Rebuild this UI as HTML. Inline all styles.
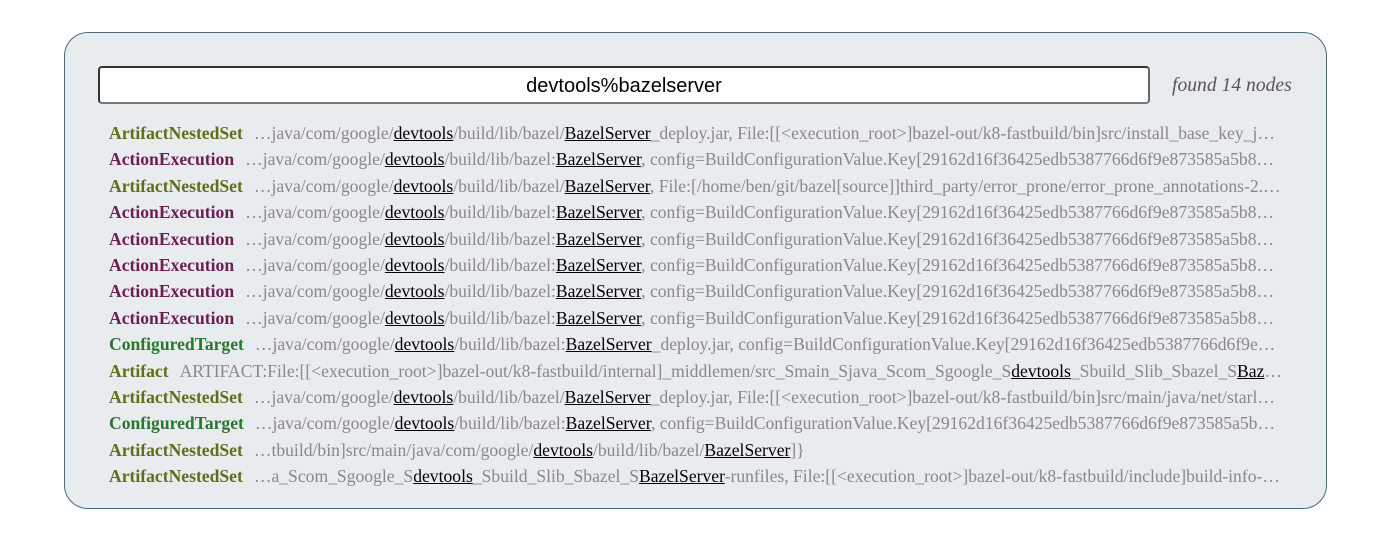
<!DOCTYPE html>
<html><head><meta charset="utf-8"><style>
body{margin:0;width:1391px;height:542px;background:#fff;overflow:hidden;}
.panel{position:absolute;left:64px;top:32px;width:1261px;height:475px;border:1px solid #4b6b7c;border-radius:24px;background:#e8ecef;}
.inp{position:absolute;left:98px;top:66px;width:1048px;height:34px;border:2px solid #333;border-bottom-color:#777;border-right-color:#666;border-radius:4px;background:#fff;font:20px "Liberation Sans",sans-serif;text-align:center;line-height:36px;color:#000;}
.found{position:absolute;left:1172px;top:75px;font:italic 19.6px "Liberation Serif",serif;color:#555;}
.rows{position:absolute;left:109px;top:120px;width:1185px;font:17.6px "Liberation Serif",serif;color:#888;}
.r{height:26.4px;line-height:26.4px;white-space:nowrap;overflow:hidden;}
.r b{margin-right:11px;}
.o{color:#5a7019}.p{color:#6e1d52}.g{color:#2a7530}
u{color:#000}
</style></head><body>
<div class="panel"></div>
<div class="inp">devtools%bazelserver</div>
<div class="found">found 14 nodes</div>
<div class="rows">
<div class="r"><b class="o">ArtifactNestedSet</b>…java/com/google/<u>devtools</u>/build/lib/bazel/<u>BazelServer</u>_deploy.jar, File:[[&lt;execution_root&gt;]bazel-out/k8-fastbuild/bin]src/install_base_key_j…</div>
<div class="r"><b class="p">ActionExecution</b>…java/com/google/<u>devtools</u>/build/lib/bazel:<u>BazelServer</u>, config=BuildConfigurationValue.Key[29162d16f36425edb5387766d6f9e873585a5b8…</div>
<div class="r"><b class="o">ArtifactNestedSet</b>…java/com/google/<u>devtools</u>/build/lib/bazel/<u>BazelServer</u>, File:[/home/ben/git/bazel[source]]third_party/error_prone/error_prone_annotations-2.…</div>
<div class="r"><b class="p">ActionExecution</b>…java/com/google/<u>devtools</u>/build/lib/bazel:<u>BazelServer</u>, config=BuildConfigurationValue.Key[29162d16f36425edb5387766d6f9e873585a5b8…</div>
<div class="r"><b class="p">ActionExecution</b>…java/com/google/<u>devtools</u>/build/lib/bazel:<u>BazelServer</u>, config=BuildConfigurationValue.Key[29162d16f36425edb5387766d6f9e873585a5b8…</div>
<div class="r"><b class="p">ActionExecution</b>…java/com/google/<u>devtools</u>/build/lib/bazel:<u>BazelServer</u>, config=BuildConfigurationValue.Key[29162d16f36425edb5387766d6f9e873585a5b8…</div>
<div class="r"><b class="p">ActionExecution</b>…java/com/google/<u>devtools</u>/build/lib/bazel:<u>BazelServer</u>, config=BuildConfigurationValue.Key[29162d16f36425edb5387766d6f9e873585a5b8…</div>
<div class="r"><b class="p">ActionExecution</b>…java/com/google/<u>devtools</u>/build/lib/bazel:<u>BazelServer</u>, config=BuildConfigurationValue.Key[29162d16f36425edb5387766d6f9e873585a5b8…</div>
<div class="r"><b class="g">ConfiguredTarget</b>…java/com/google/<u>devtools</u>/build/lib/bazel:<u>BazelServer</u>_deploy.jar, config=BuildConfigurationValue.Key[29162d16f36425edb5387766d6f9e…</div>
<div class="r"><b class="o">Artifact</b>ARTIFACT:File:[[&lt;execution_root&gt;]bazel-out/k8-fastbuild/internal]_middlemen/src_Smain_Sjava_Scom_Sgoogle_S<u>devtools</u>_Sbuild_Slib_Sbazel_S<u>Baz</u>…</div>
<div class="r"><b class="o">ArtifactNestedSet</b>…java/com/google/<u>devtools</u>/build/lib/bazel/<u>BazelServer</u>_deploy.jar, File:[[&lt;execution_root&gt;]bazel-out/k8-fastbuild/bin]src/main/java/net/starl…</div>
<div class="r"><b class="g">ConfiguredTarget</b>…java/com/google/<u>devtools</u>/build/lib/bazel:<u>BazelServer</u>, config=BuildConfigurationValue.Key[29162d16f36425edb5387766d6f9e873585a5b…</div>
<div class="r"><b class="o">ArtifactNestedSet</b>…tbuild/bin]src/main/java/com/google/<u>devtools</u>/build/lib/bazel/<u>BazelServer</u>]}</div>
<div class="r"><b class="o">ArtifactNestedSet</b>…a_Scom_Sgoogle_S<u>devtools</u>_Sbuild_Slib_Sbazel_S<u>BazelServer</u>-runfiles, File:[[&lt;execution_root&gt;]bazel-out/k8-fastbuild/include]build-info-…</div>
</div>
</body></html>
